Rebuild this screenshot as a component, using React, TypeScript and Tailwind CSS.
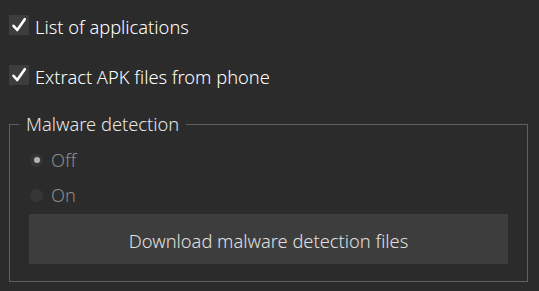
import React from "react";

function Check() {
  return (
    <span className="flex h-[20px] w-[20px] shrink-0 items-center justify-center bg-[#3d3d3d]">
      <svg width="20" height="20" viewBox="0 0 20 20">
        <path d="M4.5 10.8 L8.2 15 L15.8 4.2" fill="none" stroke="#ffffff" strokeWidth="2.6" strokeLinecap="round" strokeLinejoin="round" />
      </svg>
    </span>
  );
}

function CheckRow({ label }: { label: string }) {
  return (
    <div className="flex h-[20px] items-center gap-[6px]">
      <Check />
      <span className="mt-[4px] text-[18.3px] font-light leading-none text-white">{label}</span>
    </div>
  );
}

function Radio({ label, on }: { label: string; on?: boolean }) {
  return (
    <div className="flex h-[20px] items-center gap-[8px]">
      <span className="flex h-[13px] w-[13px] items-center justify-center rounded-full bg-[#363636]">
        {on && <span className="h-[6px] w-[6px] rounded-full bg-[#b4b4b4]" />}
      </span>
      <span className="text-[18.3px] font-light leading-none text-[#8a8a8a]">{label}</span>
    </div>
  );
}

export default function App() {
  return (
    <div
      className="flex h-[291px] w-[539px] flex-col bg-[#2b2b2b] pl-[9px] pt-[15px]"
      style={{ fontFamily: '"Noto Sans", "Open Sans", sans-serif' }}
    >
      <CheckRow label="List of applications" />
      <div className="h-[30px]" />
      <CheckRow label="Extract APK files from phone" />
      <fieldset className="mt-[29px] h-[168px] w-[519px] border border-[#5f5f5f] px-[19px]">
        <legend className="-ml-[10px] px-[7px] text-[18.3px] font-light leading-[20px] text-[#e6e6e6]">Malware detection</legend>
        <div className="flex flex-col pl-[1px] pt-[16px]">
          <Radio label="Off" on />
          <div className="h-[15px]" />
          <Radio label="On" />
        </div>
        <button className="mt-[9px] flex h-[50px] w-[479px] items-center justify-center bg-[#3d3d3d] pt-[3px] text-[18.3px] font-light text-[#e0e0e0]">
          Download malware detection files
        </button>
      </fieldset>
    </div>
  );
}
